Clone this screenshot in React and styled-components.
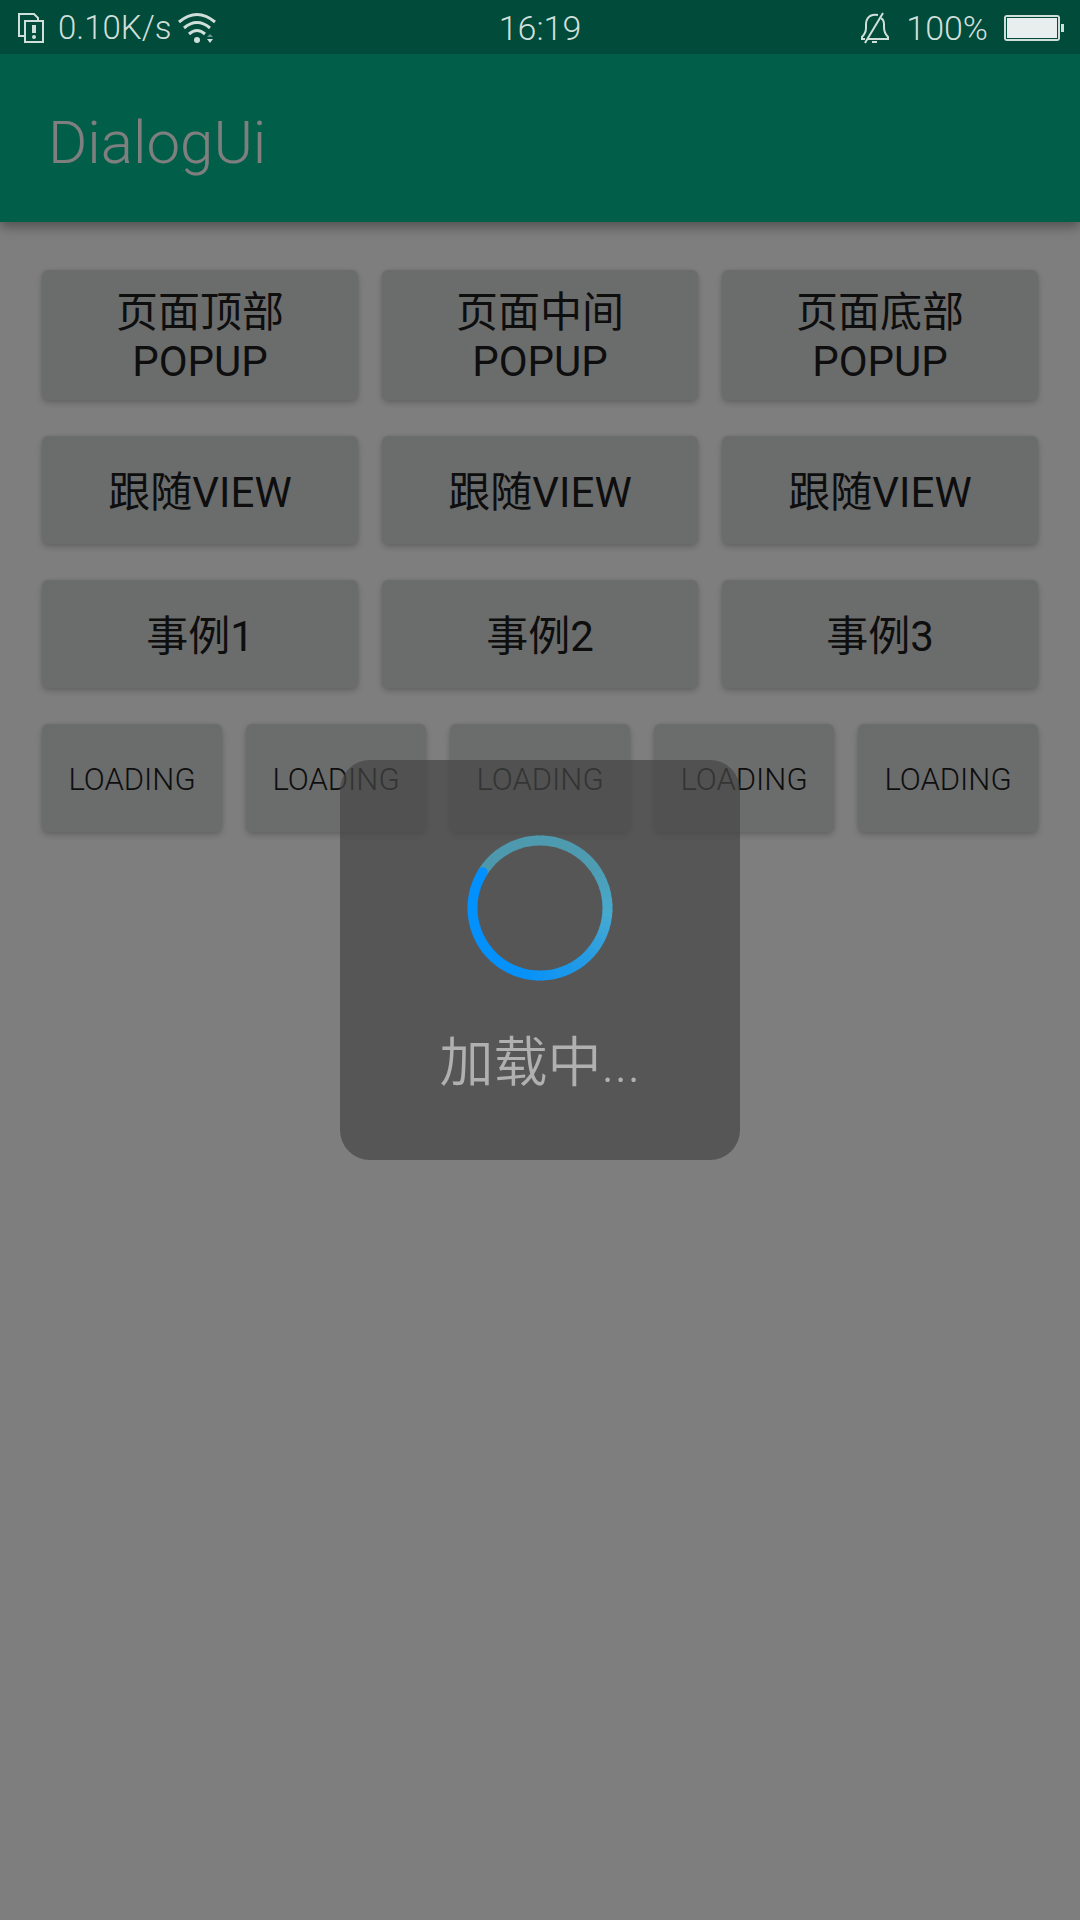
import React from "react";
import styled, { createGlobalStyle } from "styled-components";

const GlobalStyle = createGlobalStyle`
  * { box-sizing: border-box; }
  body {
    margin: 0;
    background: #fcfcfc;
    font-family: Roboto, "Noto Sans CJK SC", sans-serif;
    font-weight: 350;
  }
`;

const Screen = styled.div`
  min-height: 100vh;
  display: flex;
  flex-direction: column;
`;

const StatusBar = styled.header`
  position: relative;
  z-index: 2;
  height: 54px;
  padding: 2px 16px 0;
  display: grid;
  grid-template-columns: 1fr auto 1fr;
  align-items: center;
  background: #004b3a;
  color: #d0dfda;
  font-size: 34px;
  line-height: 52px;
`;

const StatusGroup = styled.div`
  display: flex;
  align-items: center;
  justify-content: ${(p) => (p.$end ? "flex-end" : "flex-start")};
  gap: ${(p) => (p.$end ? 16 : 6)}px;
`;

const Speed = styled.span`
  padding-left: 8px;
  font-size: 33px;
`;

const AppBar = styled.div`
  height: 168px;
  padding: 10px 48px 0;
  display: flex;
  align-items: center;
  background: #00bc92;
  box-shadow: 0 4px 12px rgba(0, 0, 0, 0.4);
`;

const Title = styled.h1`
  margin: 0;
  color: #ffffff;
  font-size: 60px;
  font-weight: 350;
  line-height: 72px;
`;

const Content = styled.main`
  padding: 48px 42px;
  display: flex;
  flex-direction: column;
  gap: 36px;
`;

const ButtonRow = styled.div`
  display: grid;
  grid-template-columns: repeat(${(p) => p.$columns}, 1fr);
  gap: 24px;
`;

const RaisedButton = styled.button`
  min-height: 108px;
  padding: ${(p) => (p.$small ? "18px 8px 16px" : "18px 60px 14px")};
  border: 0;
  border-radius: 6px;
  background: #d6d9d8;
  color: #1c1c1c;
  box-shadow: 0 3px 6px rgba(0, 0, 0, 0.2), 0 0 4px rgba(0, 0, 0, 0.06);
  font-family: inherit;
  font-size: ${(p) => (p.$small ? 31 : 42)}px;
  font-weight: ${(p) => (p.$small ? 350 : 400)};
  line-height: 49px;
  text-transform: uppercase;
`;

const Scrim = styled.div`
  position: fixed;
  inset: 0;
  z-index: 1;
  display: flex;
  align-items: center;
  justify-content: center;
  background: rgba(0, 0, 0, 0.5);
`;

const LoadingDialog = styled.div`
  width: 400px;
  height: 400px;
  padding-top: 74px;
  display: flex;
  flex-direction: column;
  align-items: center;
  gap: 46px;
  border-radius: 30px;
  background: rgba(68, 68, 68, 0.7);
`;

const LoadingText = styled.p`
  margin: 0;
  color: #b0b0b0;
  font-size: 54px;
  line-height: 72px;
`;

function NetworkIcon() {
  return (
    <svg width="28" height="32" viewBox="0 0 28 32" fill="none" stroke="currentColor" strokeWidth="2">
      <path d="M8 24H3V2H18L22 6V8" />
      <path d="M9 9H27V30H9Z" />
      <path d="M18 13V21" strokeWidth="4" />
      <circle cx="18" cy="25" r="2" fill="currentColor" stroke="none" />
    </svg>
  );
}

function WifiIcon() {
  return (
    <svg width="38" height="32" viewBox="0 0 38 32" fill="none" stroke="currentColor" strokeWidth="3">
      <path d="M1 10Q19 -5 37 10" />
      <path d="M6 16Q19 5 32 16" />
      <path d="M11 22Q19 15 27 22" />
      <circle cx="19" cy="28" r="3" fill="currentColor" stroke="none" />
      <path d="M29 25L32 22L35 25Z" fill="currentColor" stroke="none" opacity="0.5" />
      <path d="M29 27H35L32 31Z" fill="currentColor" stroke="none" />
    </svg>
  );
}

function MutedBellIcon() {
  return (
    <svg width="30" height="32" viewBox="0 0 30 32" fill="none" stroke="currentColor" strokeWidth="2">
      <path d="M8 27H28V25Q24 21 24 15V12Q24 8 21 6M18 3Q14 2 10 4Q6 7 6 12V16Q6 21 2 25V27H5" />
      <path d="M5 31L23 1" />
      <path d="M12 30H17" />
    </svg>
  );
}

function BatteryIcon() {
  return (
    <svg width="60" height="26" viewBox="0 0 60 26" fill="none">
      <rect x="1" y="1" width="54" height="24" rx="2" stroke="#d0dfda" strokeWidth="2" />
      <rect x="3" y="3" width="50" height="20" fill="#e8eded" />
      <rect x="2.5" y="2.5" width="51" height="21" stroke="#004b3a" />
      <rect x="57" y="9" width="3" height="8" fill="#d0dfda" />
    </svg>
  );
}

const RING_START = 302;
const RING_STEP = 5;
const RING_STOPS = [
  [0, [78, 152, 172]],
  [110, [78, 156, 178]],
  [150, [70, 170, 208]],
  [190, [40, 156, 226]],
  [245, [8, 146, 248]],
  [360, [0, 144, 255]],
];

function ringColor(angle) {
  const next = Math.max(1, RING_STOPS.findIndex(([stop]) => stop >= angle));
  const [a, from] = RING_STOPS[next - 1];
  const [b, to] = RING_STOPS[next];
  const t = (angle - a) / (b - a);
  return `rgb(${from.map((c, i) => Math.round(c + (to[i] - c) * t)).join(",")})`;
}

function ringPoint(angle) {
  const rad = ((RING_START + angle) * Math.PI) / 180;
  return `${(74 + 67.5 * Math.sin(rad)).toFixed(2)} ${(74 - 67.5 * Math.cos(rad)).toFixed(2)}`;
}

function Spinner() {
  const angles = Array.from({ length: 360 / RING_STEP }, (_, i) => i * RING_STEP);
  return (
    <svg width="148" height="148" viewBox="0 0 148 148" fill="none" strokeWidth="10">
      {angles.map((angle) => {
        const last = angle + RING_STEP === 360;
        const end = last ? 360 : angle + RING_STEP + 1;
        return (
          <path
            key={angle}
            d={`M${ringPoint(angle)}A67.5 67.5 0 0 1 ${ringPoint(end)}`}
            stroke={ringColor(angle)}
            strokeLinecap={last ? "round" : "butt"}
          />
        );
      })}
    </svg>
  );
}

const ROWS = [
  { labels: ["页面顶部popup", "页面中间popup", "页面底部popup"] },
  { labels: ["跟随view", "跟随view", "跟随view"] },
  { labels: ["事例1", "事例2", "事例3"] },
  { labels: ["loading", "loading", "loading", "loading", "loading"], small: true },
];

export default function App() {
  return (
    <Screen>
      <GlobalStyle />
      <StatusBar>
        <StatusGroup>
          <NetworkIcon />
          <Speed>0.10K/s</Speed>
          <WifiIcon />
        </StatusGroup>
        <span>16:19</span>
        <StatusGroup $end>
          <MutedBellIcon />
          <span>100%</span>
          <BatteryIcon />
        </StatusGroup>
      </StatusBar>
      <AppBar>
        <Title>DialogUi</Title>
      </AppBar>
      <Content>
        {ROWS.map((row, r) => (
          <ButtonRow key={r} $columns={row.labels.length}>
            {row.labels.map((label, i) => (
              <RaisedButton key={i} type="button" $small={row.small}>
                {label}
              </RaisedButton>
            ))}
          </ButtonRow>
        ))}
      </Content>
      <Scrim>
        <LoadingDialog role="dialog" aria-label="加载中">
          <Spinner />
          <LoadingText>加载中...</LoadingText>
        </LoadingDialog>
      </Scrim>
    </Screen>
  );
}
